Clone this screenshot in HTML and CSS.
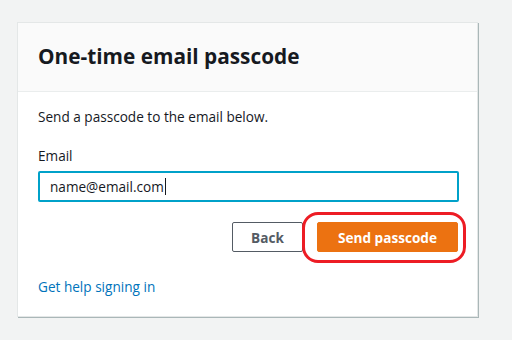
FILE: index.html
```html
<!DOCTYPE html>
<html>
<head>
<meta charset="utf-8">
<link rel="stylesheet" href="styles.css">
</head>
<body>
<div class="card">
  <div class="card-header">
    <h1 class="title">One-time email passcode</h1>
  </div>
  <div class="card-body">
    <p class="intro">Send a passcode to the email below.</p>
    <label class="label" for="email">Email</label>
    <div class="input"><span class="value">name@email.com</span><span class="caret"></span></div>
    <div class="actions">
      <button class="btn btn-secondary">Back</button>
      <div class="highlight-wrap">
        <button class="btn btn-primary">Send passcode</button>
        <span class="highlight"></span>
      </div>
    </div>
    <a class="help" href="#">Get help signing in</a>
  </div>
</div>
</body>
</html>
```
FILE: styles.css
```css
* { box-sizing: border-box; }
html, body { margin: 0; padding: 0; }
body {
  width: 512px;
  height: 340px;
  background: #f2f3f3;
  font-family: "Open Sans", "Noto Sans", sans-serif;
  color: #16191f;
  padding: 22px 0 0 17px;
  overflow: hidden;
}
.card {
  width: 461px;
  height: 295px;
  background: #fff;
  border: 1px solid #e4e7e7;
  box-shadow: 1px 1px 0 #aab7b8;
  display: flex;
  flex-direction: column;
}
.card-header {
  height: 69px;
  background: #fafafa;
  border-bottom: 1px solid #eaeded;
  padding: 0 20px 2px;
  display: flex;
  align-items: center;
}
.title {
  margin: 0;
  font-size: 20.8px;
  font-weight: 700;
  letter-spacing: 0;
  color: #16191f;
}
.card-body {
  padding: 15px 18px 0 20px;
  display: flex;
  flex-direction: column;
}
.intro {
  margin: 0;
  font-size: 13.6px;
  line-height: 20px;
  color: #16191f;
}
.label {
  margin-top: 19px;
  font-size: 13.6px;
  line-height: 20px;
  color: #16191f;
}
.input {
  margin-top: 5px;
  height: 31px;
  border: 2px solid #00a1c9;
  border-radius: 2px;
  padding: 0 10px;
  display: flex;
  align-items: center;
  font-size: 13.6px;
  color: #16191f;
}
.caret {
  display: inline-block;
  width: 1px;
  height: 17px;
  background: #16191f;
  margin-left: 1px;
}
.actions {
  margin-top: 20px;
  display: flex;
  justify-content: flex-end;
  gap: 14px;
  padding-right: 1px;
}
.btn {
  height: 30px;
  font-family: inherit;
  font-size: 13.6px;
  font-weight: 700;
  border-radius: 2px;
  padding: 0;
  cursor: pointer;
}
.btn-secondary {
  width: 71px;
  background: #fff;
  border: 1px solid #545b64;
  color: #545b64;
}
.btn-primary {
  width: 141px;
  background: #ec7211;
  border: 1px solid #ec7211;
  color: #fff;
}
.highlight-wrap {
  position: relative;
  display: flex;
}
.highlight {
  position: absolute;
  left: -15px;
  top: -10px;
  width: 164px;
  height: 51px;
  border: 3px solid #ed1c24;
  border-radius: 16px;
  pointer-events: none;
}
.help {
  margin-top: 25px;
  font-size: 13.6px;
  line-height: 20px;
  color: #0073bb;
  text-decoration: none;
  align-self: flex-start;
}
```
